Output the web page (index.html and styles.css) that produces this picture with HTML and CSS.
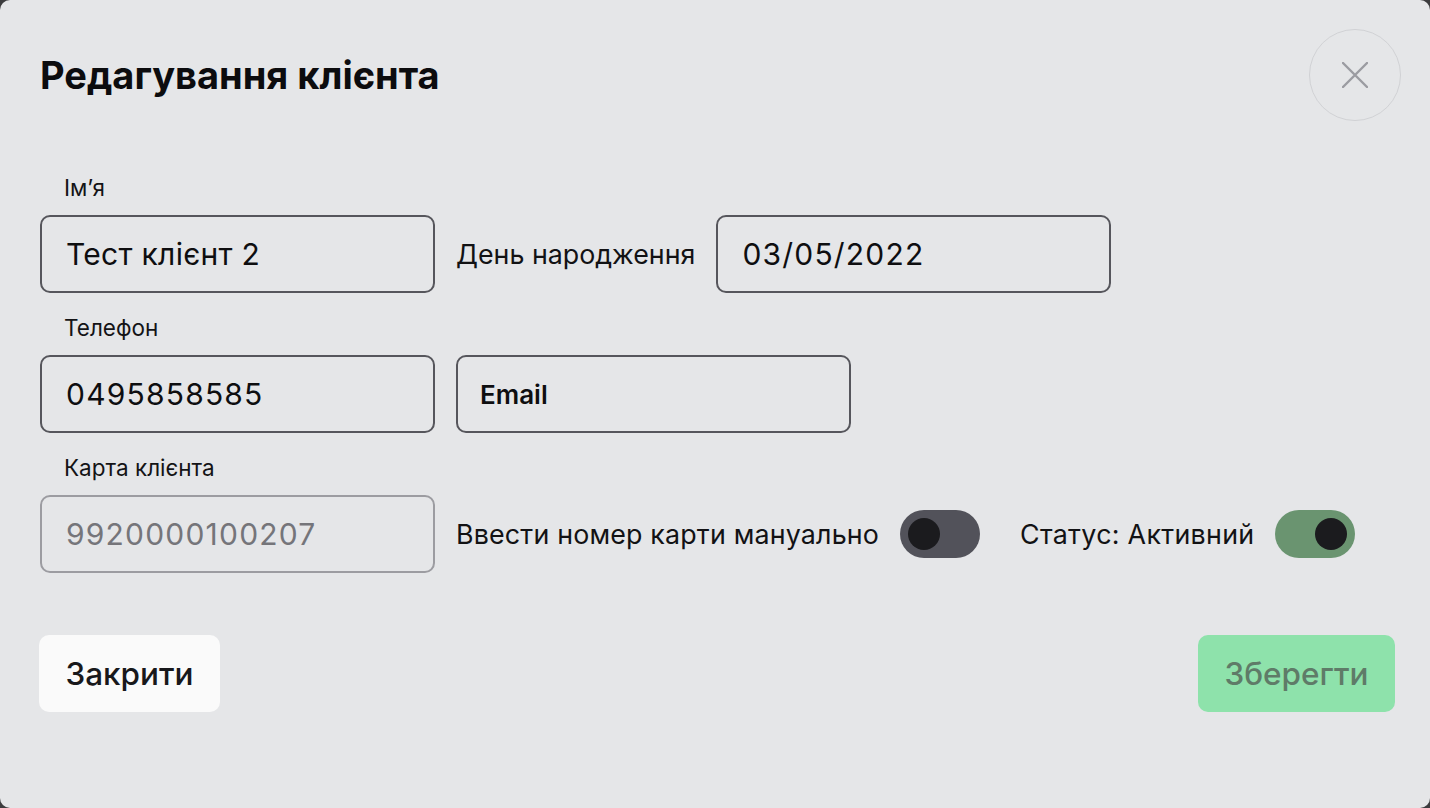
FILE: index.html
```html
<!DOCTYPE html>
<html lang="uk">
<head>
<meta charset="utf-8">
<title>Редагування клієнта</title>
<link rel="stylesheet" href="styles.css">
</head>
<body>
<div class="modal">
  <header class="modal-header">
    <h1 class="modal-title">Редагування клієнта</h1>
    <button class="close-btn" type="button" aria-label="Закрити">
      <svg width="26" height="26" viewBox="0 0 26 26"><path d="M1 1L25 25M25 1L1 25" stroke="#9b9ba1" stroke-width="2.4" stroke-linecap="round" fill="none"/></svg>
    </button>
  </header>

  <div class="form">
    <div class="field-label">Ім’я</div>
    <div class="row">
      <div class="input">Тест клієнт 2</div>
      <span class="inline-label">День народження</span>
      <div class="input num">03/05/2022</div>
    </div>

    <div class="field-label">Телефон</div>
    <div class="row">
      <div class="input num">0495858585</div>
      <div class="input placeholder-bold">Email</div>
    </div>

    <div class="field-label">Карта клієнта</div>
    <div class="row">
      <div class="input num disabled">9920000100207</div>
      <span class="inline-label manual">Ввести номер карти мануально</span>
      <span class="toggle off"><span class="knob"></span></span>
      <span class="inline-label status">Статус: Активний</span>
      <span class="toggle on"><span class="knob"></span></span>
    </div>
  </div>

  <footer class="actions">
    <button class="btn btn-close" type="button">Закрити</button>
    <button class="btn btn-save" type="button">Зберегти</button>
  </footer>
</div>
</body>
</html>
```

FILE: styles.css
```css
* { box-sizing: border-box; }
html, body {
  margin: 0;
  height: 100%;
}
body {
  background: #3c3c3e;
  font-family: Inter, "Noto Sans", sans-serif;
  color: #111113;
}
.modal {
  width: 1430px;
  height: 808px;
  background: #e5e6e8;
  border-radius: 10px;
  padding: 29px 35px 0 40px;
  display: flex;
  flex-direction: column;
}
.modal-header {
  display: flex;
  align-items: center;
  justify-content: space-between;
  height: 92px;
}
.modal-title {
  margin: 0;
  font-size: 38px;
  font-weight: 700;
  letter-spacing: 0;
  color: #0c0c0e;
}
.close-btn {
  width: 92px;
  height: 92px;
  margin-right: -6px;
  border-radius: 50%;
  border: 1.5px solid #d1d2d5;
  background: transparent;
  display: flex;
  align-items: center;
  justify-content: center;
  padding: 0;
}
.form {
  margin-top: 55px;
  display: flex;
  flex-direction: column;
}
.field-label {
  padding-left: 24px;
  font-size: 22.5px;
  line-height: 24px;
  height: 24px;
  margin-bottom: 15px;
  color: #141416;
}
.row {
  display: flex;
  align-items: center;
  gap: 21px;
  margin-bottom: 23px;
}
.input {
  width: 395px;
  height: 78px;
  flex-shrink: 0;
  border: 2px solid #56565c;
  border-radius: 10px;
  padding-left: 24px;
  display: flex;
  align-items: center;
  font-size: 30px;
  letter-spacing: 0.3px;
  color: #0e0e10;
}
.input.num {
  letter-spacing: 1.2px;
}
.input.placeholder-bold {
  font-size: 26px;
  font-weight: 600;
  letter-spacing: 0;
  padding-left: 22px;
}
.input.disabled {
  border-color: #9c9ca1;
  color: #75757a;
}
.inline-label {
  font-size: 26.8px;
  color: #121214;
  white-space: nowrap;
}
.inline-label.manual {
  letter-spacing: 0.18px;
}
.inline-label.status {
  margin-left: 19px;
  letter-spacing: 0.3px;
}
.toggle {
  width: 80px;
  height: 48px;
  border-radius: 24px;
  padding: 8px;
  display: flex;
  flex-shrink: 0;
}
.toggle .knob {
  width: 32px;
  height: 32px;
  border-radius: 50%;
  background: #1b1b1e;
}
.toggle.off { background: #52525a; }
.toggle.on { background: #6a9470; justify-content: flex-end; }
.actions {
  margin-top: 39px;
  display: flex;
  justify-content: space-between;
}
.btn {
  height: 77px;
  border: none;
  border-radius: 10px;
  font-family: Inter, "Noto Sans", sans-serif;
  font-size: 31.5px;
  font-weight: 500;
  padding: 0;
}
.btn-close {
  margin-left: -1px;
  background: #fafafa;
  color: #18181b;
  width: 181px;
}
.btn-save {
  background: #8ee2ab;
  color: #5f7b68;
  width: 197px;
}
```
